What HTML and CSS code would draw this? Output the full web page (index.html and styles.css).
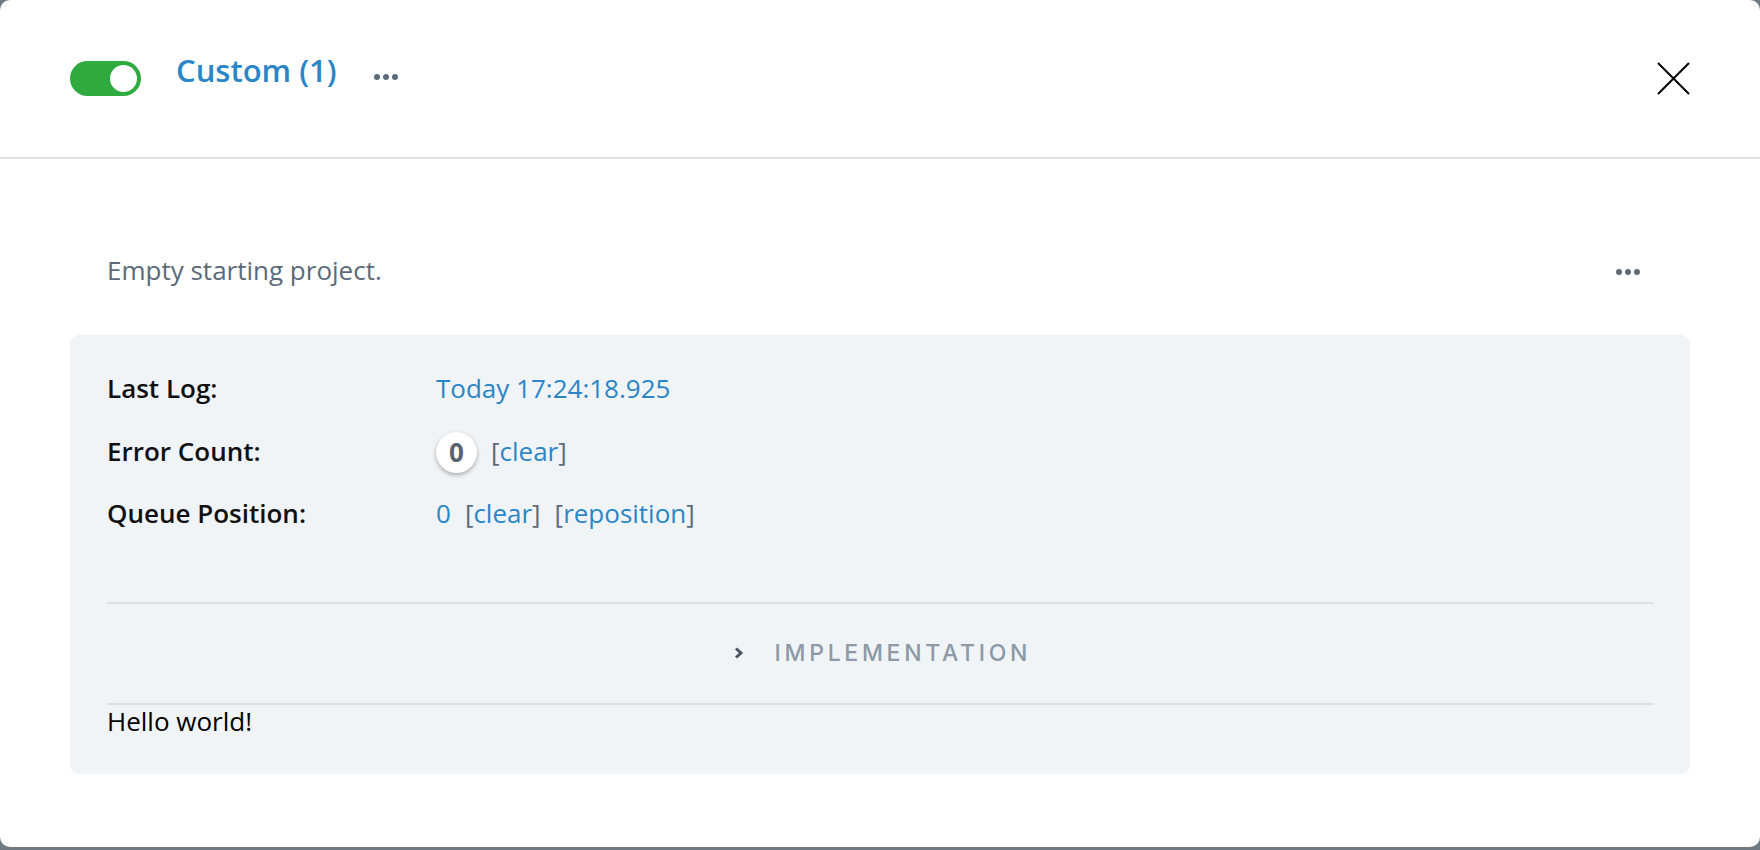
FILE: index.html
```html
<!DOCTYPE html>
<html lang="en">
<head>
<meta charset="utf-8">
<title>Custom (1)</title>
<link rel="stylesheet" href="styles.css">
</head>
<body>
<div class="modal">
  <header class="modal-header">
    <span class="toggle"><span class="knob"></span></span>
    <span class="title">Custom (1)</span>
    <span class="dots dots-header"><i></i><i></i><i></i></span>
    <span class="close">
      <svg width="33" height="33" viewBox="0 0 33 33"><path d="M1 1 L32 32 M32 1 L1 32" stroke="#000" stroke-width="2" fill="none"/></svg>
    </span>
  </header>
  <section class="modal-body">
    <div class="desc-row">
      <span class="desc">Empty starting project.</span>
      <span class="dots dots-desc"><i></i><i></i><i></i></span>
    </div>
    <div class="panel">
      <div class="info-grid">
        <div class="label">Last Log:</div>
        <div class="value"><a class="link">Today 17:24:18.925</a></div>
        <div class="label">Error Count:</div>
        <div class="value"><span class="badge">0</span><span class="action">[<a class="link">clear</a>]</span></div>
        <div class="label">Queue Position:</div>
        <div class="value"><a class="link">0</a><span class="action">[<a class="link">clear</a>]</span><span class="action">[<a class="link">reposition</a>]</span></div>
      </div>
      <div class="impl">
        <svg class="chev" width="10" height="12" viewBox="0 0 10 12"><path d="M2 1.5 L7 6 L2 10.5" stroke="#4b5663" stroke-width="3" fill="none" stroke-linejoin="miter"/></svg>
        <span class="impl-text">IMPLEMENTATION</span>
      </div>
      <div class="output">Hello world!</div>
    </div>
  </section>
</div>
</body>
</html>
```
FILE: styles.css
```css
html, body {
  margin: 0;
  padding: 0;
}
body {
  background: #6f7b80;
  font-family: "Open Sans", "Liberation Sans", sans-serif;
  width: 1760px;
  height: 850px;
  overflow: hidden;
}
.modal {
  width: 1760px;
  height: 847px;
  background: #fff;
  border-radius: 10px;
  display: flex;
  flex-direction: column;
}
.modal-header {
  height: 157px;
  border-bottom: 2px solid #dde1e5;
  display: flex;
  align-items: center;
  padding: 0 70px;
}
.toggle {
  width: 71px;
  height: 35px;
  border-radius: 18px;
  background: #2eaa3f;
  display: flex;
  align-items: center;
  justify-content: flex-end;
  padding-right: 4px;
  box-sizing: border-box;
}
.knob {
  width: 27px;
  height: 27px;
  border-radius: 50%;
  background: #fff;
}
.title {
  margin-left: 35px;
  font-size: 31px;
  font-weight: 600;
  color: #2a86c6;
  line-height: 44px;
  margin-bottom: 18px;
}
.dots {
  display: flex;
  gap: 3px;
}
.dots i {
  width: 6px;
  height: 6px;
  border-radius: 50%;
  background: #5d6b7a;
}
.dots-header {
  margin-left: 37px;
  margin-bottom: 3px;
}
.close {
  margin-left: auto;
  width: 33px;
  height: 33px;
  display: flex;
}
.modal-body {
  padding: 93px 70px 0;
}
.desc-row {
  display: flex;
  align-items: center;
  justify-content: space-between;
  padding: 0 50px 0 37px;
  height: 36px;
}
.desc {
  font-size: 26px;
  line-height: 36px;
  color: #5b6a79;
}
.dots-desc {
  margin-top: 4px;
}
.panel {
  margin-top: 47px;
  background: #f0f4f7;
  border-radius: 9px;
  padding: 35px 36px 36px 37px;
}
.info-grid {
  display: grid;
  grid-template-columns: 329px 1fr;
  grid-auto-rows: 36.5px;
  row-gap: 26px;
  font-size: 26px;
  line-height: 36.5px;
}
.label {
  font-weight: 600;
  color: #111;
}
.value {
  display: flex;
  align-items: center;
  gap: 14px;
  color: #5d6b7a;
}
.link {
  color: #2a86c6;
}
.badge {
  width: 41px;
  height: 41px;
  border-radius: 50%;
  background: #fff;
  box-shadow: 0 2px 4px rgba(0, 0, 0, 0.3);
  display: flex;
  align-items: center;
  justify-content: center;
  font-weight: 700;
  color: #5a6470;
  margin-top: 3px;
}
.impl {
  margin-top: 70px;
  border-top: 2px solid #dde1e5;
  border-bottom: 2px solid #dde1e5;
  height: 99px;
  display: flex;
  align-items: center;
  justify-content: center;
  gap: 31px;
}
.chev {
  display: block;
}
.impl-text {
  font-family: "Inter", "DejaVu Sans", sans-serif;
  font-size: 23px;
  font-weight: 500;
  letter-spacing: 3.7px;
  color: #8d99a6;
  margin-right: -3.7px;
}
.output {
  font-size: 26px;
  line-height: 33px;
  color: #000;
}
```
